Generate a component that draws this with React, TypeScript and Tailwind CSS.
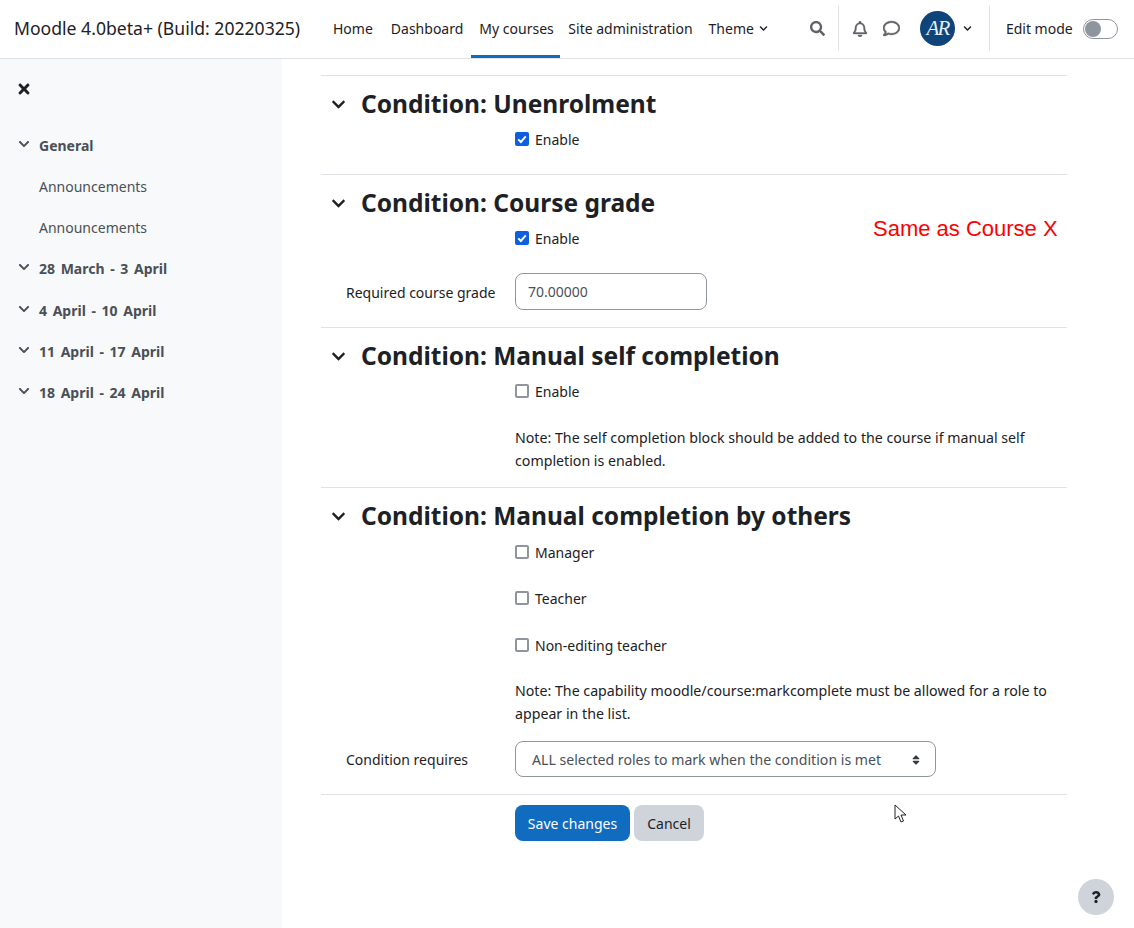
import { FaChevronDown, FaQuestion, FaRegBell, FaRegComment, FaSearch, FaSort, FaTimes } from 'react-icons/fa'

const sidebarWeeks = ['28 March - 3 April', '4 April - 10 April', '11 April - 17 April', '18 April - 24 April']

function Check({ label, checked = false }: { label: string; checked?: boolean }) {
  return (
    <div className="flex h-6 items-center gap-[6px] pl-[194px]">
      {checked ? (
        <span className="flex h-[14px] w-[14px] items-center justify-center rounded-[2px] bg-[#0d5fe0] text-white">
          <svg viewBox="0 0 16 16" className="h-3 w-3" fill="none" stroke="currentColor" strokeWidth="2.6">
            <path d="M3 8.5l3.5 3.5L13 4.5" />
          </svg>
        </span>
      ) : (
        <span className="h-[14px] w-[14px] rounded-[2px] border-2 border-[#8f959e] bg-white" />
      )}
      <span>{label}</span>
    </div>
  )
}

function SectionHeading({ title, className }: { title: string; className: string }) {
  return (
    <div className={`flex items-center border-t border-[#dee2e6] pl-[10px] ${className}`}>
      <FaChevronDown className="mr-[15px] h-[15px] w-[15px] text-[#1d2125]" />
      <h3 className="text-[24.5px] font-bold text-[#1d2125]">{title}</h3>
    </div>
  )
}

function Note({ children, className }: { children: string; className: string }) {
  return <p className={`ml-[194px] w-[535px] text-[14.2px] leading-[23px] ${className}`}>{children}</p>
}

export default function App() {
  return (
    <div className="relative h-[928px] w-[1134px] overflow-hidden bg-white font-['Noto_Sans',sans-serif] text-[14px] text-[#1d2125]">
      <header className="flex h-[59px] items-center border-b border-[#dee2e6] pl-[14px]">
        <span className="w-[311px] pb-[1px] text-[17.6px]">Moodle 4.0beta+ (Build: 20220325)</span>
        <nav className="flex h-full items-center">
          <a className="flex h-full items-center px-2 pb-[2px]">Home</a>
          <a className="ml-[2px] flex h-full items-center px-2 pb-[2px]">Dashboard</a>
          <a className="flex h-full w-[89px] items-center whitespace-nowrap border-b-[3px] border-[#0f6cbf] px-2 pt-[1px]">My courses</a>
          <a className="flex h-full items-center px-2 pb-[2px]">Site administration</a>
          <a className="flex h-full items-center gap-[5px] px-2 pb-[2px]">
            Theme <FaChevronDown className="h-[9px] w-[9px]" />
          </a>
        </nav>
        <div className="flex items-center pb-[1px]">
          <FaSearch className="ml-[34px] h-[15px] w-[15px] text-[#5f6368]" />
          <div className="ml-[13px] h-[45px] w-px bg-[#dee2e6]" />
          <FaRegBell className="ml-[13px] h-[16px] w-[16px] text-[#5f6368]" stroke="currentColor" strokeWidth={12} />
          <FaRegComment className="ml-[15px] h-[17px] w-[17px] text-[#5f6368]" stroke="currentColor" strokeWidth={12} />
          <div className="ml-[20px] flex h-[35px] w-[35px] items-center justify-center rounded-full bg-[#0e4479] font-['Liberation_Serif',serif] text-[21px] italic tracking-[-2px] text-[#e8eef5]">
            AR
          </div>
          <FaChevronDown className="ml-[8px] h-[9px] w-[9px]" />
          <div className="ml-[17px] h-[45px] w-px bg-[#dee2e6]" />
          <span className="ml-[16px]">Edit mode</span>
          <div className="ml-[10px] flex h-5 w-[35px] items-center rounded-full border border-[#8f959e] px-[1px]">
            <span className="h-4 w-4 rounded-full bg-[#8f959e]" />
          </div>
        </div>
      </header>

      <div className="flex h-[869px]">
        <aside className="w-[282px] shrink-0 bg-[#f8f9fa] pl-[18px] text-[#495057]">
          <FaTimes className="-ml-[2px] mt-[22px] h-4 w-4 text-[#1d2125]" />
          <div className="mt-[28px] flex h-[41px] items-center gap-[9px] font-bold">
            <FaChevronDown className="mb-1 h-3 w-3" /> General
          </div>
          <div className="flex h-[41px] items-center pl-[21px]">Announcements</div>
          <div className="flex h-[41px] items-center pl-[21px]">Announcements</div>
          <div className="flex h-[41px] items-center gap-[9px] font-bold [word-spacing:2px]">
            <FaChevronDown className="mb-1 h-3 w-3" /> {sidebarWeeks[0]}
          </div>
          {sidebarWeeks.slice(1).map((week, i) => (
            <div key={week} className={`flex h-[41px] items-center gap-[9px] font-bold [word-spacing:2px] ${i === 0 ? 'mt-[1px]' : ''}`}>
              <FaChevronDown className="mb-1 h-3 w-3" /> {week}
            </div>
          ))}
        </aside>

        <main className="ml-[39px] mt-4 w-[746px]">
          <SectionHeading title="Condition: Unenrolment" className="h-[52px] pt-[6px]" />
          <Check label="Enable" checked />
          <div className="h-[23px]" />

          <SectionHeading title="Condition: Course grade" className="h-[52px] pt-[6px]" />
          <Check label="Enable" checked />
          <div className="ml-[25px] mt-[23px] flex items-center">
            <span className="w-[169px] pt-[2px]">Required course grade</span>
            <div className="flex h-[37px] w-[192px] items-center rounded-[8px] border border-[#8f959e] px-3 text-[#495057]">
              70.00000
            </div>
          </div>
          <div className="h-[17px]" />

          <SectionHeading title="Condition: Manual self completion" className="h-[52px] pt-[6px]" />
          <Check label="Enable" />
          <Note className="mt-[23px] pb-[15px]">
            Note: The self completion block should be added to the course if manual self completion is enabled.
          </Note>

          <SectionHeading title="Condition: Manual completion by others" className="h-[53px] pt-[4px]" />
          <Check label="Manager" />
          <div className="h-[22px]" />
          <Check label="Teacher" />
          <div className="h-[23px]" />
          <Check label="Non-editing teacher" />
          <Note className="mt-[22px]">
            Note: The capability moodle/course:markcomplete must be allowed for a role to appear in the list.
          </Note>
          <div className="ml-[25px] mt-[16px] flex items-center">
            <span className="w-[169px]">Condition requires</span>
            <div className="flex h-[36px] w-[421px] items-center justify-between rounded-[8px] border border-[#8f959e] pl-4 pr-[13px] pt-[1px] text-[14.1px] text-[#495057]">
              ALL selected roles to mark when the condition is met
              <FaSort className="h-[12px] w-[12px] text-[#343a40]" />
            </div>
          </div>
          <div className="mt-[17px] flex gap-1 border-t border-[#dee2e6] pl-[194px] pt-[10px]">
            <button className="h-9 w-[115px] rounded-[8px] bg-[#0f6cbf] text-white">Save changes</button>
            <button className="h-9 w-[70px] rounded-[8px] bg-[#ced4da]">Cancel</button>
          </div>
        </main>
      </div>

      {/* annotation pasted over the screenshot */}
      <span className="absolute left-[873px] top-[212px] font-['Liberation_Sans',sans-serif] text-[22px] text-[#fe0000]">
        Same as Course X
      </span>
      <svg className="absolute left-[894px] top-[804px]" width="14" height="20" viewBox="0 0 14 20" fill="white" stroke="#222">
        <path d="M1 1v14l3.5-3 2.5 6 2.5-1-2.5-6h5z" />
      </svg>
      <div className="absolute left-[1078px] top-[879px] flex h-9 w-9 items-center justify-center rounded-full bg-[#ced4da]">
        <FaQuestion className="h-3 w-3 text-[#1d2125]" />
      </div>
    </div>
  )
}
